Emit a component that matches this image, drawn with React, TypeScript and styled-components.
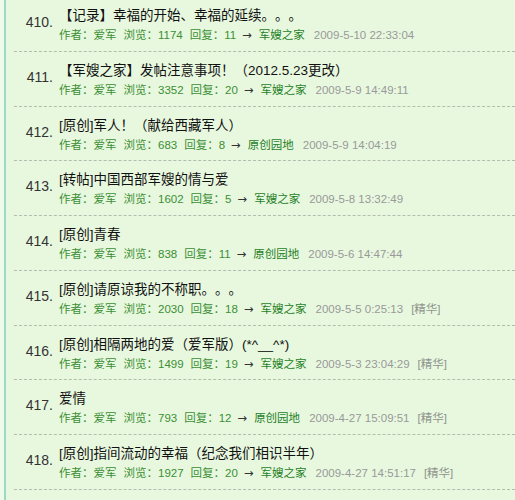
import React from 'react';
import styled, { createGlobalStyle } from 'styled-components';

const GlobalStyle = createGlobalStyle`
  html, body {
    margin: 0;
    padding: 0;
    background: #effbe9;
  }
  body {
    font-family: "Liberation Sans", Arial, "Noto Sans CJK SC", sans-serif;
    text-spacing-trim: space-all;
  }
`

const Page = styled.div`
  margin-left: 4px;
  border-left: 2px solid #9dd8c6;
  background: #e8f8df;
  height: 500px;
  overflow: hidden;
`
const List = styled.ol`
  list-style: none;
  margin: -3px 0 0;
  padding: 0 0 0 8px;
`
const Row = styled.li`
  display: flex;
  height: 54.75px;
  box-sizing: border-box;
  padding-top: 9px;
  border-bottom: 1px dashed #b4bcae;
`
const Num = styled.div`
  width: 39px;
  padding-top: 8px;
  text-align: right;
  font-size: 14px;
  line-height: 16px;
  color: #333333;
  flex-shrink: 0;
`
const Body = styled.div`
  display: flex;
  flex-direction: column;
  margin-left: 6px;
`
const Title = styled.div`
  font-size: 13.5px;
  line-height: 19px;
  color: #111111;
  white-space: nowrap;
`
const Meta = styled.div`
  display: flex;
  align-items: baseline;
  margin-top: 2px;
  font-size: 11.5px;
  line-height: 16px;
  white-space: nowrap;
`
const Stat = styled.span`
  color: #3b8f34;
  margin-right: 7px;
`
const Arrow = styled.span`
  font-family: "DejaVu Sans", sans-serif;
  font-size: 11.5px;
  color: #333333;
  margin: 0 7px 0 -1px;
`
const Board = styled.span`
  color: #1f7f1f;
  margin-right: 9px;
`
const Time = styled.span<{ $faded?: boolean }>`
  color: ${p => (p.$faded ? '#8f948c' : '#999999')};
  margin-right: 8px;
`

type Post = {
  no: number;
  title: string;
  views: number;
  replies: number;
  board: string;
  time: string;
  best?: boolean;
};

const posts: Post[] = [
  { no: 410, title: '【记录】幸福的开始、幸福的延续。。。', views: 1174, replies: 11, board: '军嫂之家', time: '2009-5-10 22:33:04' },
  { no: 411, title: '【军嫂之家】发帖注意事项！（2012.5.23更改）', views: 3352, replies: 20, board: '军嫂之家', time: '2009-5-9 14:49:11' },
  { no: 412, title: '[原创]军人！（献给西藏军人）', views: 683, replies: 8, board: '原创园地', time: '2009-5-9 14:04:19' },
  { no: 413, title: '[转帖]中国西部军嫂的情与爱', views: 1602, replies: 5, board: '军嫂之家', time: '2009-5-8 13:32:49' },
  { no: 414, title: '[原创]青春', views: 838, replies: 11, board: '原创园地', time: '2009-5-6 14:47:44' },
  { no: 415, title: '[原创]请原谅我的不称职。。。', views: 2030, replies: 18, board: '军嫂之家', time: '2009-5-5 0:25:13', best: true },
  { no: 416, title: '[原创]相隔两地的爱（爱军版）(*^__^*)', views: 1499, replies: 19, board: '军嫂之家', time: '2009-5-3 23:04:29', best: true },
  { no: 417, title: '爱情', views: 793, replies: 12, board: '原创园地', time: '2009-4-27 15:09:51', best: true },
  { no: 418, title: '[原创]指间流动的幸福（纪念我们相识半年）', views: 1927, replies: 20, board: '军嫂之家', time: '2009-4-27 14:51:17', best: true },
];

export default function App() {
  return (
    <>
      <GlobalStyle />
      <Page>
        <List>
          {posts.map(post => (
            <Row key={post.no}>
              <Num>{post.no}.</Num>
              <Body>
                <Title>{post.title}</Title>
                <Meta>
                  <Stat>作者：爱军</Stat>
                  <Stat>浏览：{post.views}</Stat>
                  <Stat>回复：{post.replies}</Stat>
                  <Arrow>→</Arrow>
                  <Board>{post.board}</Board>
                  <Time>{post.time}</Time>
                  {post.best && <Time $faded>[精华]</Time>}
                </Meta>
              </Body>
            </Row>
          ))}
        </List>
      </Page>
    </>
  );
}
